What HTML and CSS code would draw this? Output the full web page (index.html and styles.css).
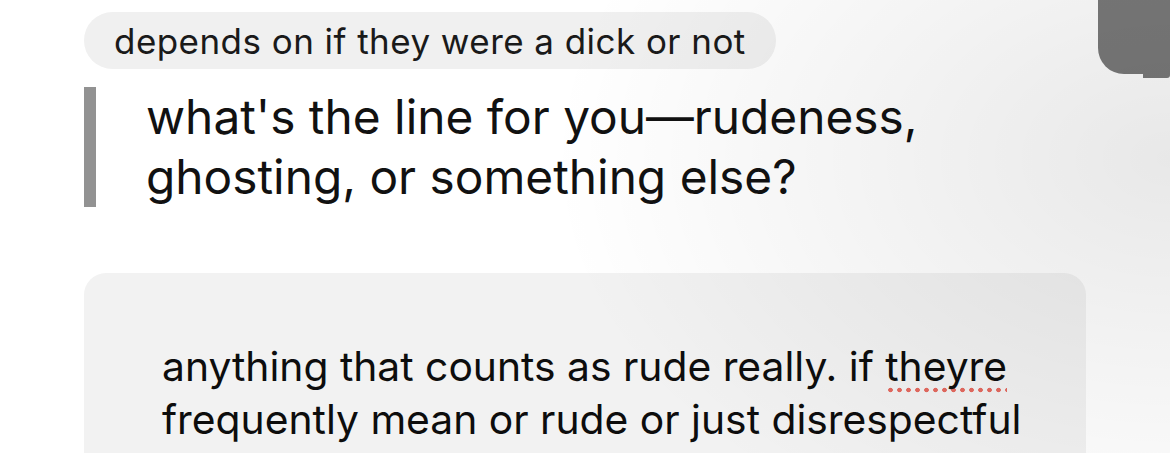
FILE: index.html
```html
<!DOCTYPE html>
<html>
<head>
<meta charset="utf-8">
<link rel="stylesheet" href="styles.css">
</head>
<body>
<div class="page">
  <div class="pill">depends on if they were a dick or not</div>
  <blockquote class="quote">what's the line for you—rudeness,<br>ghosting, or something else?</blockquote>
  <div class="reply">
    <p class="reply-text">anything that counts as rude really. if <span class="spell">theyre</span><br>frequently mean or rude or just disrespectful</p>
  </div>
</div>
<div class="corner"></div>
<div class="shade"></div>
</body>
</html>
```
FILE: styles.css
```css
html, body {
  margin: 0;
  padding: 0;
  height: 100%;
  overflow: hidden;
  background: #ffffff;
}
body {
  font-family: Inter, "Noto Sans", sans-serif;
  color: #111111;
  position: relative;
}
.page {
  padding: 12px 0 0 84px;
  display: flex;
  flex-direction: column;
  align-items: flex-start;
}
.pill {
  height: 57px;
  width: 692px;
  box-sizing: border-box;
  display: flex;
  align-items: center;
  padding: 0 0 0 30px;
  border-radius: 29px;
  background: #f0f0f0;
  font-size: 35px;
  letter-spacing: 0.45px;
  color: #1a1a1a;
}
.quote {
  margin: 18px 0 0 0;
  height: 120px;
  border-left: 12px solid #929292;
  padding-left: 50px;
  font-size: 47.8px;
  line-height: 60px;
  display: flex;
  align-items: center;
}
.reply {
  margin-top: 66px;
  width: 1002px;
  height: 260px;
  border-radius: 22px;
  background: #f2f2f2;
  box-sizing: border-box;
  padding: 67px 0 0 78px;
}
.reply-text {
  margin: 0;
  font-size: 40.8px;
  line-height: 53px;
  color: #0d0d0d;
}
.spell {
  background-image: radial-gradient(circle, #e46a60 2px, rgba(228,106,96,0) 2.6px);
  background-size: 9px 6px;
  background-repeat: repeat-x;
  background-position: 1px 100%;
  padding-bottom: 2px;
}
.corner {
  position: absolute;
  top: 0;
  right: 0;
  width: 72px;
  height: 74px;
  background: #7a7a7a;
  border-bottom-left-radius: 26px;
}
.corner::after {
  content: "";
  position: absolute;
  top: 0;
  right: 0;
  width: 27px;
  height: 78px;
  background: #7a7a7a;
  border-bottom-right-radius: 3px;
}
.shade {
  position: absolute;
  inset: 0;
  pointer-events: none;
  background: radial-gradient(ellipse 620px 420px at 100% 35%, rgba(0,0,0,0.09), rgba(0,0,0,0) 100%);
}
```
